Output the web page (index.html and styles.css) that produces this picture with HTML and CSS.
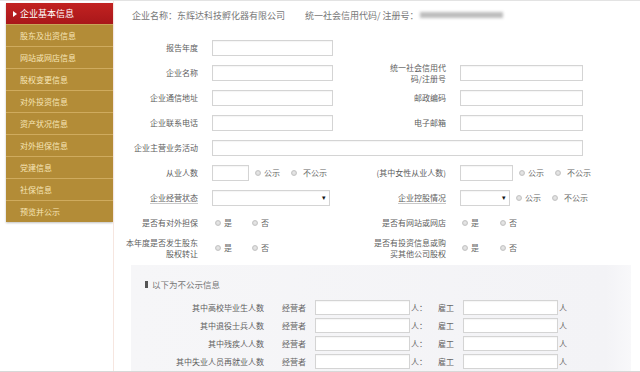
FILE: index.html
```html
<!DOCTYPE html>
<html lang="zh-CN">
<head>
<meta charset="utf-8">
<title>企业基本信息</title>
<link rel="stylesheet" href="styles.css">
</head>
<body>
<div class="page">
  <nav class="side">
    <a class="item active"><span class="arrow"></span>企业基本信息</a>
    <a class="item">股东及出资信息</a>
    <a class="item">网站或网店信息</a>
    <a class="item">股权变更信息</a>
    <a class="item">对外投资信息</a>
    <a class="item">资产状况信息</a>
    <a class="item">对外担保信息</a>
    <a class="item">党建信息</a>
    <a class="item">社保信息</a>
    <a class="item">预览并公示</a>
  </nav>
  <main class="main">
    <div class="head">
      <span class="hname">企业名称：东辉达科技孵化器有限公司</span>
      <span class="hcode">统一社会信用代码/ 注册号：</span>
      <span class="blur"></span>
    </div>
    <div class="form">
      <div class="row">
        <label class="lab">报告年度</label>
        <div class="fld"><input class="inp w121" type="text"></div>
      </div>
      <div class="row">
        <label class="lab">企业名称</label>
        <div class="fld"><input class="inp w121" type="text"></div>
        <label class="rlab">统一社会信用代<br>码/注册号</label>
        <div class="rfld"><input class="inp w123" type="text"></div>
      </div>
      <div class="row">
        <label class="lab">企业通信地址</label>
        <div class="fld"><input class="inp w121" type="text"></div>
        <label class="rlab">邮政编码</label>
        <div class="rfld"><input class="inp w123" type="text"></div>
      </div>
      <div class="row">
        <label class="lab">企业联系电话</label>
        <div class="fld"><input class="inp w121" type="text"></div>
        <label class="rlab">电子邮箱</label>
        <div class="rfld"><input class="inp w123" type="text"></div>
      </div>
      <div class="row">
        <label class="lab">企业主营业务活动</label>
        <div class="fld wide"><input class="inp w371" type="text"></div>
      </div>
      <div class="row">
        <label class="lab">从业人数</label>
        <div class="fld">
          <input class="inp w37" type="text">
          <span class="rad r1"><span class="dot"></span>公示</span>
          <span class="rad r2"><span class="dot"></span>不公示</span>
        </div>
        <label class="rlab">(其中女性从业人数)</label>
        <div class="rfld">
          <input class="inp w53" type="text">
          <span class="rad r1"><span class="dot"></span>公示</span>
          <span class="rad r2"><span class="dot"></span>不公示</span>
        </div>
      </div>
      <div class="row">
        <label class="lab"><span class="ul">企业经营状态</span></label>
        <div class="fld"><div class="sel w118"><span class="caret">▾</span></div></div>
        <label class="rlab"><span class="ul">企业控股情况</span></label>
        <div class="rfld">
          <div class="sel w50"><span class="caret">▾</span></div>
          <span class="rad r1"><span class="dot"></span>公示</span>
          <span class="rad r2"><span class="dot"></span>不公示</span>
        </div>
      </div>
      <div class="row">
        <label class="lab">是否有对外担保</label>
        <div class="fld yn">
          <span class="rad"><span class="dot"></span>是</span>
          <span class="rad no"><span class="dot"></span>否</span>
        </div>
        <label class="rlab">是否有网站或网店</label>
        <div class="rfld yn">
          <span class="rad"><span class="dot"></span>是</span>
          <span class="rad no"><span class="dot"></span>否</span>
        </div>
      </div>
      <div class="row">
        <label class="lab">本年度是否发生股东<br>股权转让</label>
        <div class="fld yn">
          <span class="rad"><span class="dot"></span>是</span>
          <span class="rad no"><span class="dot"></span>否</span>
        </div>
        <label class="rlab">是否有投资信息或购<br>买其他公司股权</label>
        <div class="rfld yn">
          <span class="rad"><span class="dot"></span>是</span>
          <span class="rad no"><span class="dot"></span>否</span>
        </div>
      </div>
    </div>
    <section class="panel">
      <div class="ptitle"><span class="bar"></span>以下为不公示信息</div>
      <div class="prows">
        <div class="prow">
          <span class="plab">其中高校毕业生人数</span>
          <span class="who">经营者</span><input class="pinp" type="text"><span class="unit">人：</span>
          <span class="who2">雇工</span><input class="pinp" type="text"><span class="unit2">人</span>
        </div>
        <div class="prow">
          <span class="plab">其中退役士兵人数</span>
          <span class="who">经营者</span><input class="pinp" type="text"><span class="unit">人：</span>
          <span class="who2">雇工</span><input class="pinp" type="text"><span class="unit2">人</span>
        </div>
        <div class="prow">
          <span class="plab">其中残疾人人数</span>
          <span class="who">经营者</span><input class="pinp" type="text"><span class="unit">人：</span>
          <span class="who2">雇工</span><input class="pinp" type="text"><span class="unit2">人</span>
        </div>
        <div class="prow">
          <span class="plab">其中失业人员再就业人数</span>
          <span class="who">经营者</span><input class="pinp" type="text"><span class="unit">人：</span>
          <span class="who2">雇工</span><input class="pinp" type="text"><span class="unit2">人</span>
        </div>
      </div>
    </section>
  </main>
</div>
</body>
</html>
```
FILE: styles.css
```css
html, body {
  margin: 0;
  padding: 0;
  background: #fff;
}
body {
  width: 640px;
  height: 372px;
  overflow: hidden;
  font-family: "Noto Sans CJK SC", "Noto Sans", sans-serif;
  color: #666;
}
.page {
  display: flex;
  align-items: flex-start;
  border-top: 1px solid #e3e3e3;
  height: 371px;
  box-sizing: border-box;
  border-bottom: 1px solid #d8d8d8;
  height: 372px;
}

/* sidebar */
.side {
  width: 107px;
  margin-left: 6px;
  margin-top: 2px;
  display: flex;
  flex-direction: column;
  background: #b38c37;
  box-shadow: 0 1px 2px rgba(0,0,0,0.25);
}
.item {
  display: flex;
  align-items: center;
  height: 21px;
  padding-left: 14px;
  font-size: 8px;
  color: #f7e6b8;
  border-bottom: 1px solid #cfab5e;
  white-space: nowrap;
}
.item:last-child { border-bottom: none; }
.item.active {
  background: linear-gradient(#c22221, #a9171a);
  color: #fff;
  font-size: 9px;
  padding-left: 7px;
  border-bottom-color: #c9a45a;
}
.arrow {
  width: 0;
  height: 0;
  border-left: 4px solid #fff;
  border-top: 3px solid transparent;
  border-bottom: 3px solid transparent;
  margin-right: 3px;
}

/* main */
.main {
  flex: 1;
  padding-top: 7px;
  border-left: 1px solid #f6e6e0;
  height: 370px;
  box-sizing: border-box;
}
.head {
  display: flex;
  align-items: center;
  height: 14px;
  padding-left: 18px;
  font-size: 9px;
  color: #777;
  white-space: nowrap;
}
.hcode { margin-left: 20px; }
.blur {
  display: inline-block;
  width: 83px;
  height: 6px;
  background: #bdbdbd;
  filter: blur(1.4px);
  margin-left: 1px;
}

.form { margin-top: 13px; }
.row {
  display: flex;
  align-items: center;
  height: 25px;
  font-size: 8px;
  white-space: nowrap;
}
.lab, .rlab {
  text-align: right;
  line-height: 11px;
  color: #5e5e5e;
}
.lab { width: 84px; }
.rlab { width: 113px; }
.fld {
  margin-left: 14px;
  width: 121px;
  display: flex;
  align-items: center;
}
.fld.wide { width: 371px; }
.rfld {
  margin-left: 14px;
  display: flex;
  align-items: center;
}
.ul {
  text-decoration: underline;
  text-decoration-color: #c8c8c8;
  text-underline-offset: 2px;
}

.inp, .sel, .pinp {
  box-sizing: border-box;
  height: 16px;
  margin: 0;
  padding: 0;
  border: 1px solid #d4d4d4;
  background: #fff;
  box-shadow: inset 0 1px 1px rgba(0,0,0,0.04);
  outline: none;
}
.w121 { width: 121px; }
.w123 { width: 123px; }
.w371 { width: 371px; }
.w37 { width: 37px; }
.w53 { width: 53px; }
.w118 { width: 118px; }
.w50 { width: 50px; }
.sel {
  display: flex;
  align-items: center;
  justify-content: flex-end;
  padding-right: 3px;
}
.caret {
  font-size: 7px;
  color: #111;
  line-height: 1;
}

.rad {
  display: inline-flex;
  align-items: center;
  color: #666;
}
.dot {
  width: 6px;
  height: 6px;
  border-radius: 50%;
  box-sizing: border-box;
  border: 1px solid #c4c4c4;
  background: radial-gradient(circle at 50% 45%, #e9e9e9 0, #d2d2d2 100%);
  margin-right: 3px;
}
.r1 { margin-left: 6px; }
.r2 { margin-left: 11px; }
.r2 .dot { margin-right: 6px; }
.yn .rad { margin-left: 3px; }
.yn .rad.no { margin-left: 20px; }
.rfld.yn .rad { margin-left: 2px; }
.rfld.yn .rad.no { margin-left: 21px; }

/* panel */
.panel {
  margin-top: 5px;
  margin-left: 17px;
  width: 500px;
  height: 106px;
  box-sizing: border-box;
  padding-top: 13px;
  background: linear-gradient(90deg, #f6f6f8, #f3f3f6 95%, #f8f8fa);
}
.ptitle {
  display: flex;
  align-items: center;
  height: 12px;
  padding-left: 14px;
  font-size: 8.5px;
  color: #777;
}
.bar {
  width: 3px;
  height: 7px;
  background: #555;
  margin-right: 4px;
}
.prows { margin-top: 8px; }
.prow {
  display: flex;
  align-items: center;
  height: 18px;
  font-size: 8px;
  white-space: nowrap;
}
.plab {
  width: 133px;
  text-align: right;
  color: #5e5e5e;
}
.who { margin-left: 18px; width: 24px; }
.pinp { margin-left: 9px; width: 95px; height: 15px; }
.unit { margin-left: 1px; width: 13px; }
.who2 { margin-left: 14px; width: 16px; }
.unit2 { margin-left: 1px; }
```
